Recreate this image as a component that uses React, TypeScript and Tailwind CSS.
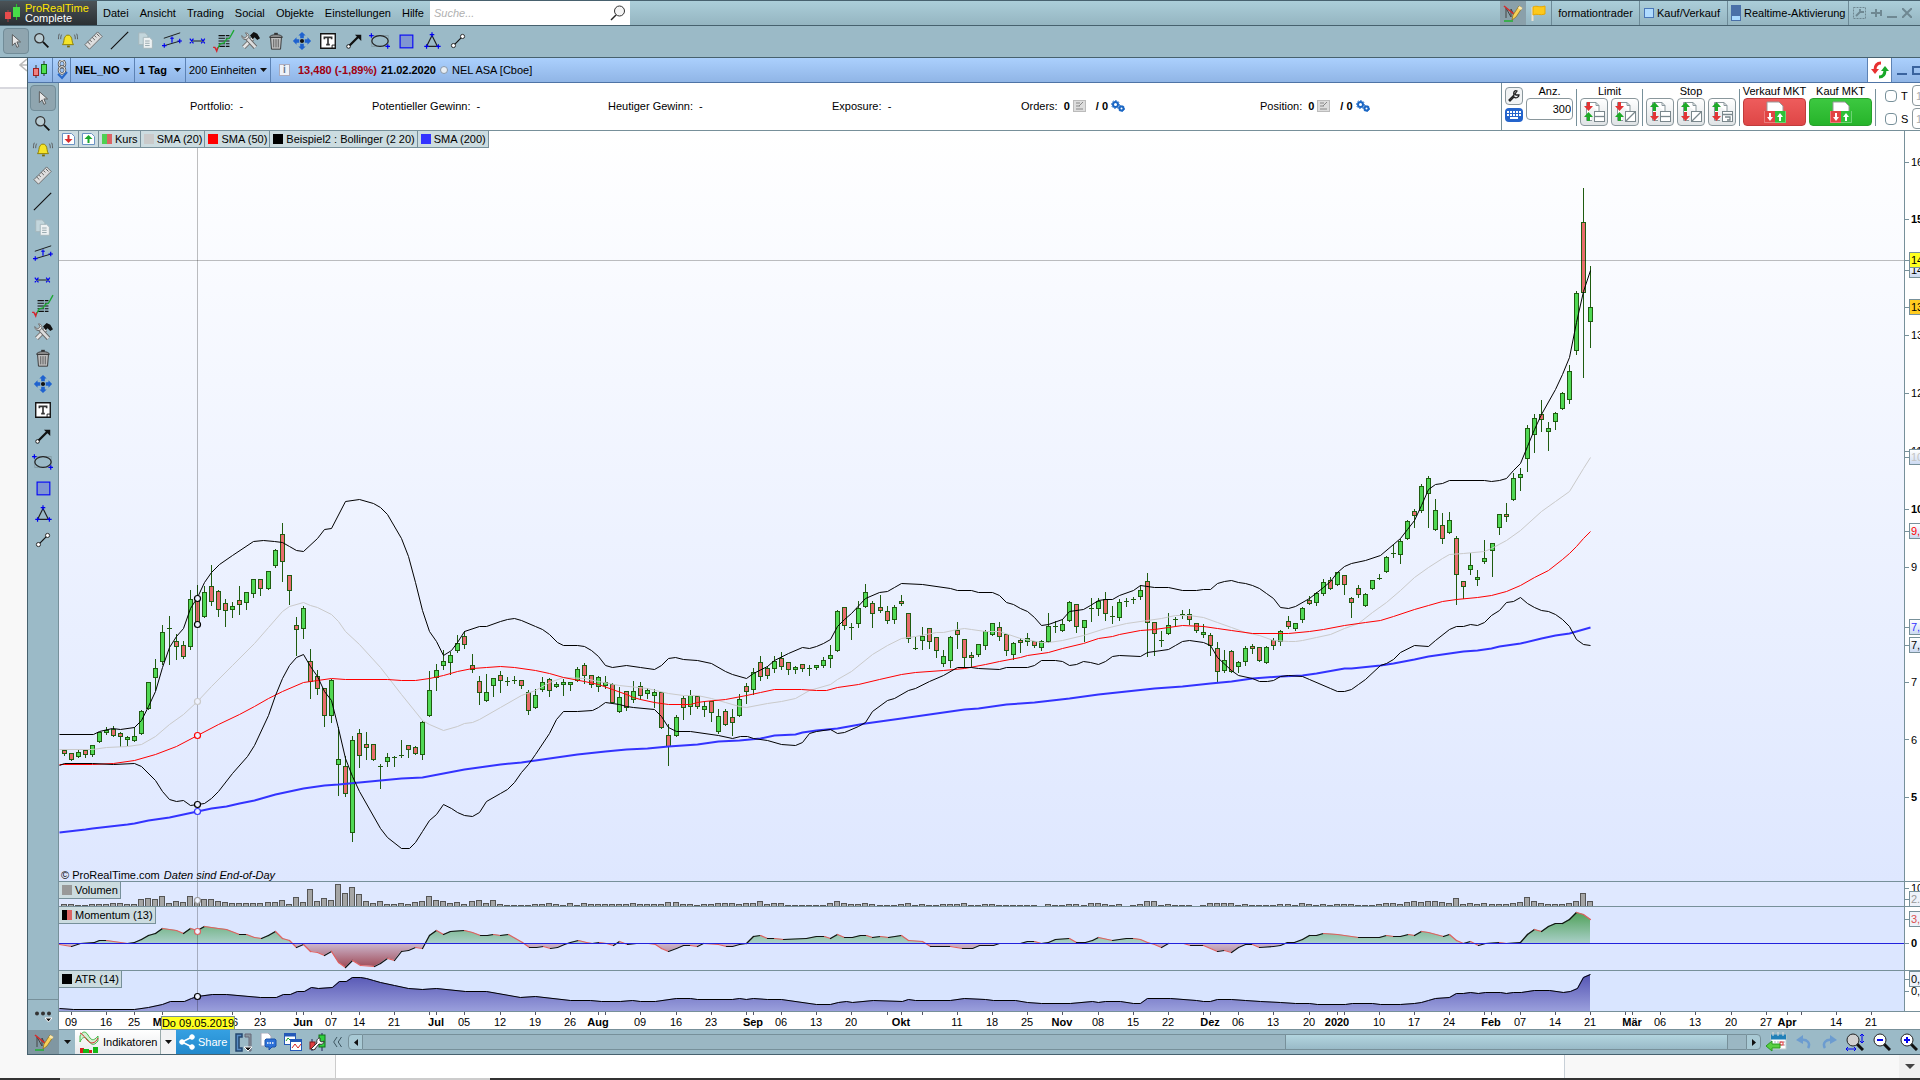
import React from 'react';

type Point = [number, number];
// high, body top, body bottom, low, direction
type Candle = [number, number, number, number, 'u' | 'd'];

const CANDLES: Candle[] = [
  [750, 750, 753, 755, 'd'], [753, 753, 759, 760, 'd'], [750, 752, 756, 757, 'u'], [750, 750, 754, 757, 'd'],
  [745, 745, 754, 756, 'u'], [732, 732, 741, 742, 'u'], [727, 730, 732, 734, 'u'], [726, 729, 735, 736, 'd'],
  [732, 733, 736, 746, 'd'], [736, 737, 739, 745, 'u'], [727, 736, 740, 741, 'u'], [710, 711, 733, 734, 'u'],
  [682, 682, 708, 709, 'u'], [659, 668, 677, 690, 'u'], [625, 632, 661, 664, 'u'], [616, 628, 628, 664, 'u'],
  [634, 641, 646, 659, 'd'], [641, 645, 656, 658, 'd'], [590, 599, 646, 649, 'u'], [585, 598, 624, 627, 'd'],
  [586, 592, 616, 617, 'u'], [565, 586, 601, 605, 'd'], [590, 591, 609, 616, 'd'], [599, 603, 610, 626, 'd'],
  [602, 606, 609, 617, 'u'], [586, 600, 604, 614, 'd'], [592, 592, 602, 609, 'u'], [579, 579, 593, 597, 'u'],
  [579, 579, 588, 595, 'd'], [571, 571, 588, 589, 'u'], [549, 550, 565, 567, 'u'], [523, 534, 561, 581, 'd'],
  [575, 575, 590, 604, 'd'], [617, 625, 629, 655, 'd'], [606, 608, 628, 638, 'u'], [649, 661, 681, 698, 'd'],
  [670, 676, 688, 694, 'd'], [688, 688, 715, 726, 'd'], [679, 680, 715, 722, 'u'], [727, 759, 764, 795, 'u'],
  [756, 766, 793, 796, 'd'], [736, 740, 832, 841, 'u'], [729, 733, 755, 767, 'd'], [732, 744, 747, 759, 'd'],
  [744, 744, 759, 760, 'd'], [764, 765, 766, 788, 'u'], [753, 757, 761, 766, 'u'], [756, 757, 757, 766, 'u'],
  [740, 755, 755, 757, 'u'], [745, 745, 749, 757, 'd'], [746, 747, 753, 754, 'd'], [721, 722, 754, 759, 'u'],
  [671, 690, 715, 716, 'u'], [664, 670, 677, 690, 'u'], [650, 661, 665, 669, 'u'], [652, 655, 662, 674, 'u'],
  [635, 643, 650, 652, 'u'], [631, 636, 644, 648, 'd'], [654, 665, 669, 672, 'd'], [676, 681, 692, 704, 'd'],
  [674, 692, 700, 701, 'u'], [678, 678, 685, 696, 'u'], [671, 675, 680, 692, 'd'], [677, 680, 681, 685, 'u'],
  [676, 680, 680, 683, 'u'], [680, 680, 685, 688, 'd'], [690, 692, 710, 714, 'd'], [689, 695, 707, 708, 'u'],
  [677, 682, 689, 691, 'u'], [678, 679, 690, 696, 'd'], [682, 684, 686, 687, 'u'], [679, 682, 684, 695, 'u'],
  [682, 682, 684, 690, 'u'], [667, 669, 680, 681, 'u'], [663, 665, 675, 683, 'd'], [675, 675, 684, 687, 'd'],
  [676, 677, 686, 691, 'u'], [676, 682, 685, 688, 'u'], [683, 684, 702, 703, 'd'], [687, 697, 711, 712, 'u'],
  [691, 691, 707, 710, 'd'], [681, 691, 699, 702, 'u'], [682, 686, 695, 699, 'd'], [688, 690, 693, 698, 'u'],
  [689, 692, 695, 707, 'u'], [692, 692, 727, 728, 'd'], [724, 735, 746, 765, 'd'], [715, 717, 735, 736, 'u'],
  [696, 698, 707, 719, 'd'], [690, 695, 706, 714, 'u'], [696, 696, 706, 708, 'd'], [701, 706, 709, 716, 'u'],
  [701, 701, 712, 721, 'd'], [709, 716, 731, 733, 'u'], [709, 711, 724, 725, 'd'], [709, 717, 722, 735, 'd'],
  [694, 699, 715, 716, 'u'], [683, 686, 691, 703, 'd'], [668, 672, 689, 694, 'u'], [656, 662, 676, 680, 'd'],
  [666, 668, 675, 678, 'd'], [656, 661, 668, 672, 'u'], [652, 658, 666, 669, 'd'], [662, 662, 669, 674, 'd'],
  [666, 667, 669, 673, 'u'], [664, 664, 668, 671, 'd'], [665, 667, 668, 675, 'u'], [665, 665, 667, 669, 'u'],
  [657, 660, 665, 667, 'u'], [645, 655, 658, 667, 'u'], [610, 611, 650, 651, 'u'], [607, 607, 625, 629, 'd'],
  [623, 626, 627, 639, 'u'], [601, 608, 623, 627, 'u'], [584, 592, 606, 607, 'u'], [601, 603, 613, 627, 'd'],
  [595, 607, 610, 612, 'd'], [606, 611, 620, 623, 'd'], [605, 607, 619, 623, 'u'], [595, 601, 603, 605, 'd'],
  [613, 613, 638, 642, 'd'], [637, 647, 648, 649, 'u'], [627, 636, 640, 649, 'u'], [628, 628, 641, 648, 'd'],
  [637, 637, 650, 657, 'd'], [650, 656, 663, 666, 'u'], [636, 637, 660, 667, 'u'], [622, 630, 634, 648, 'd'],
  [639, 639, 657, 667, 'd'], [652, 655, 657, 667, 'd'], [644, 644, 654, 656, 'u'], [630, 631, 645, 649, 'u'],
  [623, 623, 634, 635, 'u'], [622, 627, 636, 640, 'd'], [634, 634, 650, 655, 'd'], [642, 643, 654, 659, 'u'],
  [638, 640, 642, 652, 'd'], [633, 638, 641, 645, 'u'], [641, 641, 645, 647, 'd'], [640, 641, 647, 650, 'u'],
  [613, 626, 641, 642, 'u'], [621, 626, 626, 632, 'u'], [619, 624, 630, 631, 'u'], [601, 602, 620, 621, 'u'],
  [604, 604, 626, 632, 'd'], [620, 620, 627, 641, 'u'], [598, 608, 608, 621, 'u'], [598, 601, 608, 615, 'u'],
  [592, 599, 613, 620, 'd'], [606, 616, 616, 623, 'u'], [599, 602, 617, 620, 'u'], [598, 601, 601, 606, 'u'],
  [597, 599, 599, 603, 'u'], [585, 590, 596, 599, 'u'], [573, 581, 622, 656, 'd'], [622, 622, 633, 655, 'd'],
  [631, 639, 640, 646, 'u'], [613, 625, 633, 634, 'u'], [617, 619, 619, 625, 'u'], [610, 613, 614, 618, 'u'],
  [609, 614, 619, 624, 'd'], [623, 623, 630, 632, 'd'], [624, 632, 634, 637, 'u'], [633, 635, 645, 655, 'd'],
  [642, 648, 671, 681, 'd'], [650, 660, 670, 672, 'u'], [650, 651, 671, 672, 'd'], [661, 662, 666, 672, 'u'],
  [646, 648, 661, 665, 'u'], [644, 646, 648, 653, 'd'], [647, 647, 660, 661, 'd'], [646, 647, 662, 663, 'u'],
  [638, 640, 645, 649, 'd'], [630, 631, 641, 645, 'u'], [616, 621, 626, 628, 'd'], [623, 623, 628, 630, 'u'],
  [607, 608, 619, 622, 'u'], [596, 600, 603, 604, 'd'], [592, 593, 602, 605, 'u'], [579, 582, 593, 595, 'u'],
  [577, 580, 588, 589, 'd'], [572, 572, 584, 585, 'u'], [575, 575, 584, 594, 'd'], [597, 598, 602, 617, 'd'],
  [585, 588, 594, 597, 'd'], [593, 594, 605, 606, 'u'], [580, 580, 588, 589, 'u'], [574, 577, 578, 579, 'u'],
  [556, 557, 571, 572, 'u'], [544, 552, 553, 557, 'u'], [539, 541, 554, 563, 'u'], [520, 521, 538, 539, 'u'],
  [509, 511, 515, 527, 'd'], [484, 486, 510, 512, 'u'], [476, 478, 493, 527, 'u'], [499, 510, 529, 530, 'u'],
  [513, 525, 538, 543, 'd'], [512, 520, 532, 533, 'u'], [536, 538, 574, 604, 'd'], [581, 581, 586, 598, 'd'],
  [553, 565, 569, 574, 'u'], [570, 577, 579, 585, 'u'], [540, 558, 561, 563, 'u'], [543, 543, 550, 576, 'u'],
  [514, 514, 527, 534, 'u'], [503, 514, 516, 521, 'd'], [473, 478, 499, 500, 'u'], [468, 474, 477, 490, 'u'],
  [425, 428, 458, 471, 'u'], [414, 418, 434, 452, 'u'], [400, 414, 419, 431, 'd'], [422, 428, 431, 450, 'u'],
  [412, 413, 421, 429, 'u'], [392, 393, 408, 409, 'u'], [365, 371, 399, 403, 'u'], [291, 293, 350, 354, 'u'],
  [188, 222, 292, 377, 'd'], [266, 307, 321, 347, 'u'],
];

const VOLUME = [
  2, 2, 1, 1, 2, 2, 2, 3, 3, 2, 2, 7, 8, 7, 10, 3, 5, 4, 10, 7, 7, 7, 5, 4, 3, 3, 3, 3, 3, 4, 4, 6, 2, 9, 4, 17, 5, 8, 6,
  22, 13, 19, 12, 5, 3, 5, 2, 2, 3, 2, 4, 5, 10, 6, 5, 3, 4, 2, 5, 6, 3, 6, 2, 1, 1, 1, 1, 2, 2, 3, 2, 1, 3, 1, 3, 2, 2,
  2, 2, 2, 2, 3, 2, 2, 2, 2, 4, 4, 2, 2, 1, 2, 2, 3, 3, 3, 2, 3, 3, 5, 2, 3, 3, 1, 1, 1, 1, 1, 1, 3, 5, 3, 2, 2, 3, 2,
  1, 1, 1, 2, 3, 1, 2, 1, 1, 2, 2, 2, 3, 1, 1, 2, 2, 1, 1, 1, 1, 1, 1, 0, 2, 1, 1, 2, 2, 1, 3, 3, 2, 1, 2, 0, 1, 2, 5,
  5, 1, 2, 1, 1, 1, 0, 1, 3, 3, 3, 3, 1, 2, 1, 1, 1, 1, 2, 2, 1, 3, 2, 1, 2, 1, 2, 2, 2, 1, 1, 1, 2, 3, 3, 2, 4, 5, 4,
  5, 5, 4, 3, 8, 2, 3, 2, 3, 2, 2, 2, 3, 4, 9, 5, 3, 2, 2, 2, 3, 5, 13, 5,
];

const UPPER =
  '59,734 93,734 99,731 112,728 120,729 134,727 141,720 148,706 155,691 162,667 169,647 176,636 183,628 190,608 197,597 204,582 211,572 219,564 232,555 253,541 263,540 274,541 282,542 289,546 296,550 303,551 317,538 324,529 331,528 345,501 359,499 373,503 380,507 387,514 401,538 408,556 415,582 422,610 429,631 436,641 443,655 451,650 457,642 464,631 479,626 486,626 500,621 507,619 514,618 521,620 535,626 542,629 549,634 557,642 563,645 577,645 584,646 591,650 598,656 605,665 612,667 626,665 640,667 654,669 661,665 668,658 675,657 683,659 697,660 711,663 725,671 732,674 746,678 753,673 767,666 774,660 788,653 802,647 809,648 816,646 823,643 830,639 837,626 844,619 851,613 865,598 879,592 887,591 894,587 901,583 922,584 950,588 957,590 971,590 978,592 992,592 999,595 1006,602 1013,604 1020,608 1027,611 1034,617 1041,625 1048,624 1062,619 1069,611 1083,609 1090,605 1098,600 1105,599 1112,599 1119,595 1133,590 1140,585 1154,587 1168,587 1182,590 1196,590 1203,589 1210,589 1217,583 1224,581 1231,580 1238,582 1245,583 1252,585 1259,588 1266,593 1273,598 1280,607 1288,608 1295,606 1309,598 1323,587 1330,581 1337,572 1344,566 1351,563 1365,560 1380,555 1393,544 1400,538 1407,529 1414,520 1421,505 1428,489 1435,484 1442,483 1449,480 1484,480 1491,481 1499,480 1506,478 1513,470 1520,463 1527,446 1534,429 1541,414 1555,389 1562,374 1569,357 1576,322 1583,291 1590,270';

const LOWER =
  '59,765 64,763 92,763 113,764 134,763 141,766 155,780 162,791 169,799 176,801 183,800 190,805 197,804 204,803 211,798 218,791 232,773 247,756 254,745 268,715 275,695 282,678 289,665 296,657 303,654 310,666 317,676 324,691 331,700 338,728 345,758 352,776 359,791 380,828 387,837 401,848 409,848 415,842 422,831 429,820 436,814 443,804 451,808 457,812 464,815 472,816 479,812 486,801 500,793 507,789 514,782 521,772 528,764 535,754 549,733 556,719 563,711 577,711 592,710 598,707 605,702 612,703 619,704 626,706 633,707 654,709 661,716 668,727 676,731 690,731 718,735 732,738 740,736 747,736 753,738 767,740 781,744 795,745 802,742 809,733 816,731 830,729 837,733 844,732 858,726 865,722 872,711 887,700 894,698 908,690 915,688 929,681 943,675 957,667 971,667 978,668 999,669 1006,667 1027,667 1034,665 1041,660 1055,660 1062,661 1069,665 1076,664 1083,661 1090,662 1098,664 1105,661 1112,656 1119,655 1140,656 1147,652 1154,651 1168,649 1175,645 1182,641 1189,640 1203,642 1210,645 1217,657 1231,670 1238,675 1252,678 1259,681 1267,681 1273,680 1280,676 1288,675 1302,676 1309,679 1330,688 1337,691 1344,691 1351,689 1358,684 1365,679 1380,665 1386,663 1393,659 1400,652 1414,645 1428,646 1435,640 1449,629 1456,626 1463,626 1470,624 1477,625 1484,622 1491,615 1499,610 1506,602 1513,601 1520,597 1527,603 1534,607 1541,610 1548,611 1555,614 1562,619 1569,626 1576,639 1583,644 1590,645';

const SMA20 =
  '59,749 92,749 106,747 127,746 141,744 155,736 169,724 183,714 197,701 211,686 232,665 254,643 268,627 282,611 289,606 303,602 310,605 317,607 331,614 338,621 345,631 359,644 380,667 401,694 422,720 429,724 443,730 457,726 464,723 472,722 479,719 500,707 521,695 535,690 549,682 563,677 584,678 598,681 619,685 647,688 668,693 683,695 697,695 711,698 725,702 739,706 746,707 767,703 781,701 795,698 809,690 830,684 837,679 851,671 872,654 887,645 901,638 915,636 936,632 943,632 957,629 964,628 971,629 985,631 999,631 1020,638 1041,642 1048,642 1062,640 1083,635 1105,628 1126,623 1147,620 1161,618 1175,615 1189,615 1203,617 1217,622 1231,627 1245,632 1259,635 1273,640 1288,641 1295,641 1302,640 1316,637 1330,634 1344,628 1358,623 1372,612 1386,602 1400,590 1414,577 1428,567 1442,558 1449,554 1463,553 1484,551 1491,548 1506,540 1520,530 1541,511 1555,501 1569,491 1583,468 1590,457';

const SMA50 =
  '59,764 92,764 113,763 134,760 155,754 176,746 197,735 218,724 239,714 254,706 268,698 282,691 303,682 317,680 331,678 345,679 387,679 401,680 415,680 429,678 443,675 457,671 472,668 486,667 500,666 514,667 535,670 549,673 563,677 584,681 598,684 612,689 626,694 633,697 640,699 654,702 668,704 690,704 697,702 704,701 725,699 746,695 760,692 774,689 801,689 816,690 826,690 837,687 858,684 879,679 901,674 915,672 943,670 964,668 985,664 999,661 1020,657 1027,655 1048,652 1062,648 1083,643 1098,638 1112,636 1119,634 1140,630 1154,629 1168,627 1182,625 1203,626 1217,628 1231,630 1252,633 1288,633 1309,631 1323,629 1344,625 1365,622 1380,620 1393,616 1414,609 1428,605 1442,601 1456,599 1477,597 1491,595 1506,591 1520,585 1534,577 1548,570 1562,559 1569,553 1576,546 1583,538 1590,531';

const SMA200 =
  '59,832 85,829 92,828 127,824 134,823 148,820 169,817 183,814 197,811 211,808 226,806 239,803 254,800 275,794 303,788 324,785 338,784 359,782 380,780 401,778 422,777 443,773 464,769 500,764 521,762 542,759 549,758 577,754 605,751 626,749 647,748 668,746 697,744 718,741 739,740 760,738 774,735 795,734 802,732 816,730 837,728 865,723 901,718 929,714 950,711 964,709 978,708 1006,704 1020,703 1034,702 1069,698 1098,694 1126,691 1154,688 1182,686 1210,683 1231,681 1252,678 1280,676 1302,675 1316,673 1344,668 1351,668 1380,665 1393,663 1414,659 1428,656 1463,651 1477,650 1491,648 1499,646 1520,643 1541,638 1555,635 1569,633 1590,627';

const MOMENTUM: Point[] = [
  [59, 944], [71, 946], [80, 943], [94, 942], [99, 940], [106, 940], [120, 942], [127, 943], [134, 942], [141, 939], [148, 935],
  [155, 933], [162, 928], [176, 930], [183, 933], [190, 928], [197, 930], [204, 926], [218, 928], [226, 929], [239, 934],
  [246, 934], [254, 937], [261, 938], [268, 935], [275, 931], [282, 938], [289, 940], [296, 947], [303, 944], [310, 951],
  [317, 952], [324, 955], [331, 951], [338, 962], [345, 967], [352, 960], [360, 965], [374, 966], [380, 963], [387, 958],
  [394, 960], [401, 951], [408, 950], [415, 947], [422, 948], [429, 935], [436, 930], [443, 934], [450, 931], [464, 930],
  [472, 932], [480, 935], [487, 935], [493, 934], [500, 935], [508, 934], [515, 938], [522, 942], [529, 947], [536, 947],
  [543, 946], [550, 948], [557, 947], [564, 944], [570, 942], [578, 940], [586, 942], [592, 943], [599, 942], [606, 943],
  [613, 945], [619, 941], [627, 944], [636, 943], [648, 943], [655, 944], [661, 948], [668, 951], [676, 948], [683, 945],
  [690, 945], [697, 946], [703, 943], [718, 944], [726, 946], [732, 946], [739, 944], [746, 943], [753, 936], [760, 935],
  [767, 938], [774, 938], [783, 939], [806, 938], [816, 936], [824, 936], [830, 938], [837, 934], [844, 937], [852, 937],
  [860, 935], [866, 935], [872, 937], [880, 936], [888, 937], [901, 935], [908, 940], [922, 941], [930, 946], [950, 946],
  [962, 948], [972, 948], [979, 945], [993, 945], [999, 943], [1020, 943], [1027, 941], [1034, 941], [1041, 943], [1048, 942],
  [1055, 939], [1069, 938], [1076, 942], [1085, 942], [1092, 940], [1098, 937], [1112, 940], [1126, 938], [1133, 938],
  [1140, 939], [1147, 942], [1154, 944], [1161, 947], [1168, 943], [1183, 943], [1190, 945], [1203, 945], [1217, 951],
  [1224, 950], [1231, 952], [1238, 947], [1245, 944], [1252, 944], [1259, 947], [1273, 946], [1280, 945], [1287, 942],
  [1294, 942], [1302, 939], [1309, 935], [1316, 935], [1323, 933], [1337, 934], [1358, 937], [1379, 937], [1386, 935],
  [1393, 936], [1400, 936], [1408, 934], [1414, 935], [1421, 931], [1428, 932], [1443, 936], [1449, 934], [1456, 940],
  [1463, 943], [1470, 941], [1478, 945], [1485, 943], [1499, 942], [1506, 943], [1520, 942], [1527, 934], [1534, 929],
  [1541, 931], [1548, 926], [1555, 923], [1562, 923], [1569, 919], [1576, 912], [1583, 914], [1590, 919],
];

const ATR =
  '59,1008 73,1009 134,1009 148,1007 162,1004 170,1001 184,1001 191,998 197,996 212,994 226,994 260,997 276,997 283,994 290,994 297,991 304,991 311,987 318,988 332,987 339,981 346,981 352,977 360,977 366,978 373,980 380,982 394,985 408,988 422,989 436,988 465,991 486,991 520,997 535,996 570,1000 590,1000 601,1001 620,1001 632,1000 640,1001 655,1001 676,998 690,998 697,999 732,999 739,998 746,999 753,998 767,999 781,999 816,1004 830,1004 838,1002 846,1001 852,1002 873,1000 902,1001 908,999 915,1000 950,1000 964,998 985,999 993,1000 1015,1000 1027,1002 1041,1003 1070,1003 1092,1001 1098,1002 1105,1001 1120,1001 1133,1003 1140,1003 1147,998 1170,998 1196,1000 1203,1001 1210,1001 1217,999 1231,999 1245,1000 1260,1001 1280,1002 1295,1003 1309,1003 1317,1004 1345,1004 1352,1003 1372,1003 1380,1004 1400,1004 1414,1003 1421,1002 1428,1000 1435,998 1449,997 1456,993 1463,993 1470,992 1478,993 1485,992 1500,992 1506,993 1513,992 1521,992 1534,990 1549,990 1563,992 1570,991 1577,988 1583,977 1590,974';

const DATES: [string, number][] = [
  ['09', 71], ['16', 106], ['25', 134], ['Mai', 162], ['16', 232], ['23', 260], ['Jun', 303], ['07', 331], ['14', 359],
  ['21', 394], ['Jul', 436], ['05', 464], ['12', 500], ['19', 535], ['26', 570], ['Aug', 598], ['09', 640], ['16', 676],
  ['23', 711], ['Sep', 753], ['06', 781], ['13', 816], ['20', 851], ['Okt', 901], ['11', 957], ['18', 992], ['25', 1027],
  ['Nov', 1062], ['08', 1098], ['15', 1133], ['22', 1168], ['Dez', 1210], ['06', 1238], ['13', 1273], ['20', 1309],
  ['2020', 1337], ['10', 1379], ['17', 1414], ['24', 1449], ['Feb', 1491], ['07', 1520], ['14', 1555], ['21', 1590],
  ['Mär', 1632], ['06', 1660], ['13', 1695], ['20', 1731], ['27', 1766], ['Apr', 1787], ['14', 1836], ['21', 1871],
];
const EXTRA_TICKS = [296, 429, 605, 746, 887, 922, 1203, 1344, 1484, 1625, 1801];

const LEFT = 59;
const WIDTH = 1845;
const ZERO = 943;
const CURSOR_X = 197.5;

const barX = (i: number) => 64 + Math.floor((i * 204) / 29);
const pct = (x: number) => `${((x - LEFT) / WIDTH) * 100}%`;

const TOOLS = [
  'cursor', 'zoom', 'alarm', 'ruler', 'line', 'copy', 'channel', 'segment', 'system', 'tools', 'trash', 'move', 'text',
  'arrow', 'ellipse', 'rect', 'triangle', 'nodes',
] as const;
type Tool = (typeof TOOLS)[number];

const TOOL_DRAWINGS: Record<Tool, React.ReactNode> = {
  cursor: <path d="M7 4v12l3-3 2 5 2-1-2-5h4z" fill="#e8e8e8" stroke="#555" />,
  zoom: (
    <>
      <circle cx="8" cy="8" r="5" fill="#b9ccd3" stroke="#333" strokeWidth="1.4" />
      <path d="M12 12l6 6" stroke="#111" strokeWidth="2" />
    </>
  ),
  alarm: (
    <>
      <path d="M5 15c2-2 1-7 3-9 1-2 5-2 6 0 2 2 1 7 3 9z" fill="#f5e428" stroke="#8a7a00" />
      <path d="M10 17h3" stroke="#7a6a00" strokeWidth="2" />
      <path d="M4 4c-1 2-1 3-1 5M1.500 3c-1 2-1 4-1 6M18 4c1 2 1 3 1 5M20.500 3c1 2 1 4 1 6" fill="none" stroke="#555" />
    </>
  ),
  ruler: (
    <>
      <path d="M1 15L15 1l5 5L6 20z" fill="#dedede" stroke="#666" />
      <path d="M4 12l3 3M6.500 10l2 2M9 7l3 3M11.500 5l2 2M14 3l3 3" stroke="#555" />
    </>
  ),
  line: <path d="M1 20L20 1" stroke="#111" strokeWidth="1.3" />,
  copy: (
    <>
      <path d="M3 2h7l3 3v10H3z" fill="#c3d6dc" stroke="#a3b5bb" />
      <path d="M8 7h7l3 3v9H8z" fill="#eef2f3" stroke="#a3b5bb" />
      <path d="M10 11h5M10 13.500h5M10 16h5" stroke="#8fa1a8" />
    </>
  ),
  channel: (
    <>
      <path d="M2 8l18-6M3 16l17-5" stroke="#111" />
      <path d="M0 16h5M2.500 13.500v5M17 11h5M19.500 8.500v5M11 6v7M9 8h4" stroke="#0000f0" strokeWidth="1.300" />
    </>
  ),
  segment: (
    <>
      <path d="M4 11h14" stroke="#111" />
      <path d="M2 8.500l4 5M2 13.500l4-5M14.500 8.500l4 5M14.500 13.500l4-5" stroke="#0000f0" strokeWidth="1.300" />
    </>
  ),
  system: (
    <>
      <path d="M5 5h13M5 8h13M5 11h13M5 14h13M5 17h13" stroke="#111" strokeWidth="1.300" strokeDasharray="7 1 4 1" />
      <path d="M3 21l4-7 4-1 3-4 3-1 5-9" fill="none" stroke="#1ca832" strokeWidth="1.500" />
      <path d="M-1 18l2 0 2 4 1-4" fill="none" stroke="#d8202c" strokeWidth="1.500" />
    </>
  ),
  tools: (
    <>
      <path d="M4 18L14 8" stroke="#777" strokeWidth="5" />
      <path d="M4 18L14 8" stroke="#e6e6e6" strokeWidth="3" />
      <path d="M6 6l11 12" stroke="#666" strokeWidth="5" />
      <path d="M6 6l11 12" stroke="#ddd" strokeWidth="3" />
      <path d="M2 5l3 3 3-3-2-3c3 0 5 3 3 6-3 3-7 1-7-3z" fill="#ddd" stroke="#666" />
      <path d="M11 5l4-4 4 2 3 5-3 2-3-3-2 2z" fill="#111" />
    </>
  ),
  trash: (
    <>
      <path d="M5 7h12l-1 13H6z" fill="#bdbdbd" stroke="#333" />
      <path d="M8.500 9v9M11 9v9M13.500 9v9" stroke="#555" />
      <path d="M4 7c0-4 14-4 14 0z" fill="#999" stroke="#333" />
      <path d="M9 3h4" stroke="#333" strokeWidth="2" />
    </>
  ),
  move: (
    <>
      <circle cx="11" cy="11" r="2.300" fill="#111" />
      <path d="M11 1l4 4h-2v3H9V5H7zM11 21l4-4h-2v-3H9v3H7zM1 11l4-4v2h3v4H5v2zM21 11l-4-4v2h-3v4h3v2z" fill="#1f62cf" />
    </>
  ),
  text: (
    <>
      <path d="M3 3h16v16H3z" fill="#fff" stroke="#111" strokeWidth="1.500" />
      <path d="M15.500 19v-3.500h3.500" fill="none" stroke="#111" />
      <path d="M7 9V7h8v2M11 7v8M9 15h4" fill="none" stroke="#333" strokeWidth="1.800" />
    </>
  ),
  arrow: (
    <>
      <path d="M5 17L16 6" stroke="#111" strokeWidth="2.500" />
      <path d="M12 4h7v7z" fill="#111" />
      <circle cx="5" cy="17" r="2" fill="#fff" stroke="#111" />
    </>
  ),
  ellipse: (
    <>
      <rect x="2" y="5" width="18" height="12" fill="none" stroke="#829aa4" />
      <ellipse cx="11" cy="11" rx="9" ry="6" fill="none" stroke="#222" strokeWidth="1.300" />
      <path d="M-1 5h5M1.500 2.500v5M17 17h5M19.500 14.500v5" stroke="#0000f0" strokeWidth="1.300" />
    </>
  ),
  rect: <rect x="4.500" y="4.500" width="14" height="14" fill="#8096d2" stroke="#0a0af5" strokeWidth="1.300" />,
  triangle: (
    <>
      <path d="M11 5L5 17h12z" fill="none" stroke="#222" strokeWidth="1.300" />
      <path d="M8.500 4h5M11 1.500v5M2.500 17h5M5 14.500v5M15.500 17h5M18 14.500v5" stroke="#0000f0" strokeWidth="1.300" />
    </>
  ),
  nodes: (
    <>
      <path d="M6 16L16 6" stroke="#111" strokeWidth="1.300" />
      <circle cx="6" cy="16" r="2.300" fill="#fff" stroke="#222" />
      <circle cx="16" cy="6" r="2.300" fill="#fff" stroke="#222" />
    </>
  ),
};

const ToolButton: React.FC<{ tool: Tool }> = ({ tool }) => (
  <button
    type="button"
    aria-label={tool}
    className={`flex size-[26px] shrink-0 items-center justify-center rounded-sm border ${
      tool === 'cursor' ? 'border-[#718c98] bg-[#8fa5af]' : 'border-transparent'
    }`}
  >
    <svg width="20" height="20" viewBox="0 0 22 22" className="overflow-visible">
      {TOOL_DRAWINGS[tool]}
    </svg>
  </button>
);

const Caret: React.FC = () => (
  <svg width="7" height="4" viewBox="0 0 7 4">
    <path d="M0 0h7L3.500 4z" fill="#111" />
  </svg>
);

const PencilIcon: React.FC = () => (
  <svg width="20" height="18" viewBox="0 0 20 18">
    <path d="M3 14V4l5 9V5l3 6" fill="none" stroke="#444" />
    <path d="M1 2l11 9" stroke="#d82828" strokeWidth="1.500" />
    <path d="M1 17h9" stroke="#20b030" strokeWidth="1.500" />
    <path d="M9 16l1-5 6-9 3 2-6 9z" fill="#f9d25a" stroke="#8a6a18" strokeWidth="0.700" />
    <path d="M15 4l3 2 1.500-2-3-2z" fill="#fbe9b0" />
  </svg>
);

const Header: React.FC = () => (
  <header className="flex h-[26px] shrink-0 items-stretch border-y border-[#47616e] bg-linear-to-b from-[#abced9] to-[#95b5c1]">
    <div className="flex w-[97px] items-center gap-1 bg-linear-to-b from-[#4b5357] to-[#2b3034] pl-1">
      <svg width="17" height="20" viewBox="0 0 17 20">
        <path d="M4 7v12" stroke="#b04040" />
        <path d="M12.500 1v16" stroke="#28c428" />
        <rect x="1" y="9" width="6" height="7" fill="#e84c4c" />
        <rect x="9" y="4" width="7" height="10" fill="#48dc48" />
      </svg>
      <div className="text-[11px] leading-[10px] text-white">
        <div className="text-[#ffe600]">ProRealTime</div>
        <div>Complete</div>
      </div>
    </div>
    <nav className="flex w-[333px] items-center justify-between pl-1.5 pr-1.5">
      {['Datei', 'Ansicht', 'Trading', 'Social', 'Objekte', 'Einstellungen', 'Hilfe'].map(item => (
        <button type="button" key={item}>{item}</button>
      ))}
    </nav>
    <label className="flex w-[200px] items-center bg-white px-1">
      <input type="text" aria-label="Suche" placeholder="Suche..." className="min-w-0 flex-1 italic outline-none placeholder:text-[#b0b0b0]" />
      <svg width="16" height="16" viewBox="0 0 16 16">
        <circle cx="9.500" cy="6" r="5" fill="#f4f4f4" stroke="#333" />
        <path d="M6 10l-5 5" stroke="#222" strokeWidth="1.500" />
      </svg>
    </label>
    <div className="flex-1" />
    <button type="button" aria-label="Zeichnen" className="flex w-[26px] items-center justify-center bg-[#8aa0aa]"><PencilIcon /></button>
    <button type="button" aria-label="Flagge" className="flex w-[25px] items-center justify-center">
      <svg width="16" height="17" viewBox="0 0 16 17">
        <path d="M1.500 2v14" stroke="#e8e0d0" strokeWidth="2" />
        <path d="M2 2c4-2 6 1 12-1v8c-5 2-8-1-12 1z" fill="#fcc91c" stroke="#e8a800" />
      </svg>
    </button>
    <button type="button" className="flex w-[88px] items-center justify-center border-l border-[#6d8a97]">formationtrader</button>
    <button type="button" className="flex w-[88px] items-center gap-[3px] border-l border-[#6d8a97] pl-1 whitespace-nowrap">
      <span className="size-[10px] shrink-0 border border-[#4a78b8] bg-[#b0dcff]" />Kauf/Verkauf
    </button>
    <button type="button" className="flex w-[121px] items-center gap-[3px] border-l border-[#6d8a97] pl-[3px] whitespace-nowrap">
      <span className="flex h-4 w-[10px] shrink-0 items-end border border-[#4a70a8] bg-[#4a70a8]"><span className="h-1 w-full bg-[#a8d8ff]" /></span>
      Realtime-Aktivierung
    </button>
    <div className="flex w-[72px] items-center justify-between border-l border-[#6d8a97] pl-1 pr-2">
      <button type="button" aria-label="Einstellungen">
        <svg width="13" height="12" viewBox="0 0 13 12" fill="none" stroke="#6f8892">
          <rect x="0.500" y="0.500" width="12" height="11" strokeDasharray="2 1" />
          <path d="M3 9l4-4M7 2v3h4" strokeWidth="1.800" />
        </svg>
      </button>
      <button type="button" aria-label="Anheften">
        <svg width="11" height="8" viewBox="0 0 11 8"><path d="M0 4h4M5 0v8M5 4h5M10 1v6" stroke="#6f8892" strokeWidth="2" /></svg>
      </button>
      <button type="button" aria-label="Minimieren">
        <svg width="10" height="10" viewBox="0 0 10 10"><path d="M0 9h10" stroke="#6f8892" strokeWidth="2" /></svg>
      </button>
      <button type="button" aria-label="Schließen">
        <svg width="10" height="10" viewBox="0 0 10 10"><path d="M0 0l10 10M10 0L0 10" stroke="#6f8892" strokeWidth="2" /></svg>
      </button>
    </div>
  </header>
);

const TitleBar: React.FC = () => (
  <div className="flex h-[25px] shrink-0 items-stretch border-b border-[#4f74a6] bg-linear-to-b from-[#abd0fd] to-[#90b5e6] whitespace-nowrap">
    <div className="flex w-6 items-center justify-center">
      <svg width="16" height="18" viewBox="0 0 16 18">
        <path d="M4 4v13M12 0v15" stroke="#333" />
        <rect x="1.500" y="7.500" width="5" height="7" fill="#f08080" stroke="#a02020" />
        <rect x="9.500" y="3.500" width="5" height="9" fill="#50e050" stroke="#107010" />
      </svg>
    </div>
    <button type="button" aria-label="Verknüpfen" className="flex w-[18px] items-center justify-center border-l border-[#5c82b4]">
      <svg width="12" height="20" viewBox="0 0 12 20" fill="none">
        <ellipse cx="6" cy="4" rx="3" ry="3.500" stroke="#555" strokeWidth="2.500" />
        <ellipse cx="6" cy="4" rx="3" ry="3.500" stroke="#eee" />
        <ellipse cx="6" cy="10" rx="3" ry="3.500" stroke="#555" strokeWidth="2.500" />
        <ellipse cx="6" cy="10" rx="3" ry="3.500" stroke="#eee" />
        <path d="M2 14l4 4 5-6" stroke="#2868c8" strokeWidth="2" />
      </svg>
    </button>
    <button type="button" className="flex w-16 items-center justify-between border-l border-[#5c82b4] px-1 font-bold">NEL_NO <Caret /></button>
    <button type="button" className="flex w-[51px] items-center justify-between border-l border-[#5c82b4] px-1 font-bold">1 Tag <Caret /></button>
    <button type="button" className="flex w-[86px] items-center justify-between border-x border-[#5c82b4] px-[3px]">200 Einheiten <Caret /></button>
    <div className="flex flex-1 items-center gap-1 pl-2">
      <span className="flex h-3 w-[11px] items-center justify-center border border-[#aab] bg-[#eef2f8] text-[10px] font-bold text-[#667890]">i</span>
      <span className="ml-1 font-bold text-[#a00010]">13,480 (-1,89%)</span>
      <span className="font-bold">21.02.2020</span>
      <span className="size-2 rounded-full border border-[#8a98a8] bg-[#e8eef4]" />
      <span>NEL ASA [Cboe]</span>
    </div>
    <button type="button" aria-label="Aktualisieren" className="flex w-6 items-center justify-center border-l border-[#5c82b4] bg-white">
      <svg width="18" height="18" viewBox="0 0 18 18">
        <path d="M10 2C5 2 4 6 4 9" fill="none" stroke="#e83030" strokeWidth="3" />
        <path d="M0 8h8l-4 5z" fill="#e83030" />
        <path d="M8 16c5 0 6-4 6-7" fill="none" stroke="#18a828" strokeWidth="3" />
        <path d="M10 10h8l-4-5z" fill="#18a828" />
      </svg>
    </button>
    <div className="flex w-[29px] items-center gap-1 overflow-hidden border-l border-[#5c82b4] pl-[5px]">
      <svg width="26" height="12" viewBox="0 0 26 12" className="shrink-0">
        <path d="M0 10h10" stroke="#3a639e" strokeWidth="2" />
        <rect x="16" y="3" width="9" height="7" fill="none" stroke="#3a639e" strokeWidth="2" />
      </svg>
    </div>
  </div>
);

const OrderIcon: React.FC<{ first: 'buy' | 'sell'; mark: string }> = ({ first, mark }) => (
  <svg width="22" height="22" viewBox="0 0 22 22">
    <path d="M3.500 1.500H13l3 3v6M3.500 1.500v18H9" fill="#fff" stroke="#8a979c" />
    <path d="M13 1.500v3h3" fill="none" stroke="#8a979c" />
    {first === 'sell' ? (
      <>
        <path d="M4 1h3v4h3l-4.500 5L1 5h3z" fill="#e23434" />
        <path d="M4 20h3v-4h3l-4.500-5L1 16h3z" fill="#1eaa28" />
      </>
    ) : (
      <>
        <path d="M4 10h3V6h3L5.500 1 1 6h3z" fill="#1eaa28" />
        <path d="M4 11h3v4h3l-4.500 5L1 15h3z" fill="#e23434" />
      </>
    )}
    <rect x="11.500" y="10.500" width="10" height="10" fill="#fff" stroke="#7a878c" />
    <path d={mark} fill="none" stroke="#7a878c" strokeWidth="1.300" />
  </svg>
);

const MARK_EVEN = 'M12 15.500h9';
const MARK_SLOPE = 'M12 20l9-9';
const MARK_STEP = 'M12 13.500h9M14 16h5v3h-3';

const OrderButton: React.FC<{ label: string; first: 'buy' | 'sell'; mark: string }> = ({ label, first, mark }) => (
  <button type="button" aria-label={label} className="flex h-7 w-7 items-center justify-center rounded-sm border border-[#8a979c] bg-linear-to-b from-white to-[#dfe3e5]">
    <OrderIcon first={first} mark={mark} />
  </button>
);

const MarketIcon: React.FC = () => (
  <svg width="22" height="22" viewBox="0 0 22 22">
    <path d="M3 1h12l4 4v6H3z" fill="#fff" stroke="#999" />
    <rect x="0" y="10" width="11" height="12" fill="#e24444" />
    <rect x="11" y="10" width="11" height="12" fill="#30c038" />
    <path d="M0.500 10v11.500h21V10" fill="none" stroke="#fff" strokeOpacity="0.300" />
    <path d="M5 12h2v4h2l-3 4-3-4h2zM15 20h2v-4h2l-3-4-3 4h2z" fill="#fff" />
  </svg>
);

const Gears: React.FC = () => (
  <svg width="14" height="12" viewBox="0 0 14 12" fill="none" stroke="#1a66c4" strokeWidth="2">
    <circle cx="4.500" cy="4.500" r="2.500" />
    <circle cx="4.500" cy="4.500" r="4" strokeWidth="1" strokeDasharray="1.500 1.500" />
    <circle cx="10.500" cy="8.500" r="2" />
    <circle cx="10.500" cy="8.500" r="3" strokeWidth="1" strokeDasharray="1.500 1.500" />
  </svg>
);

const Counter: React.FC<{ label: string }> = ({ label }) => (
  <div className="flex items-center">
    {label} <b className="ml-1.5">0</b>
    <svg width="13" height="12" viewBox="0 0 13 12" className="ml-[3px]">
      <rect x="0.500" y="0.500" width="12" height="11" fill="#ddd" stroke="#bbb" />
      <path d="M3 3h4M3 6h4M3 9h7M10 2L6 6" stroke="#888" />
    </svg>
    <b className="ml-[10px]">/ 0</b>
    <span className="ml-[3px]"><Gears /></span>
  </div>
);

const TradingPanel: React.FC = () => (
  <section className="flex h-12 shrink-0 items-stretch overflow-hidden border-b border-[#77909a] bg-white whitespace-nowrap">
    <div className="grid flex-1 grid-cols-[182fr_236fr_224fr_189fr_239fr_241fr] items-center pb-0.5 pl-[131px]">
      <div>Portfolio: &nbsp;-</div>
      <div>Potentieller Gewinn: &nbsp;-</div>
      <div>Heutiger Gewinn: &nbsp;-</div>
      <div>Exposure: &nbsp;-</div>
      <Counter label="Orders:" />
      <Counter label="Position:" />
    </div>
    <div className="flex gap-[3px] border-l border-[#77909a] pl-[3px] pt-0.5">
      <div className="flex flex-col gap-[3px] pt-0.5">
        <button type="button" aria-label="Einstellungen" className="flex size-[18px] items-center justify-center rounded-sm border border-[#8a979c] bg-[#f1f3f4]">
          <svg width="12" height="12" viewBox="0 0 12 12" fill="none" stroke="#222" strokeWidth="1.300"><path d="M1 10l5-5c-1-3 1-5 3-4L7 4l1 1h3c0 2-3 4-5 2l-4 4z" /></svg>
        </button>
        <button type="button" aria-label="Tastatur" className="flex h-[14px] w-[18px] items-center justify-center rounded-sm bg-[#2464cc]">
          <svg width="14" height="8" viewBox="0 0 14 8"><path d="M0 1h14M0 4h14" stroke="#fff" strokeWidth="2" strokeDasharray="2 1" /><path d="M3 7h8" stroke="#fff" strokeWidth="2" /></svg>
        </button>
      </div>
      <label className="flex w-[47px] flex-col items-center leading-[13px]">
        Anz.
        <input type="text" defaultValue="300" className="h-[22px] w-full rounded-sm border border-[#8a979c] pr-px text-right" />
      </label>
      <div className="my-1 w-px bg-[#77909a]" />
      <div className="flex flex-col items-center leading-[13px]">
        Limit
        <div className="flex gap-[3px]">
          <OrderButton label="Limit" first="sell" mark={MARK_EVEN} />
          <OrderButton label="Limit an Linie" first="sell" mark={MARK_SLOPE} />
        </div>
      </div>
      <div className="my-1 w-px bg-[#77909a]" />
      <div className="flex flex-col items-center leading-[13px]">
        Stop
        <div className="flex gap-[3px]">
          <OrderButton label="Stop" first="buy" mark={MARK_EVEN} />
          <OrderButton label="Stop an Linie" first="buy" mark={MARK_SLOPE} />
          <OrderButton label="Trailing Stop" first="buy" mark={MARK_STEP} />
        </div>
      </div>
      <div className="my-1 w-px bg-[#77909a]" />
      <div className="flex w-[63px] flex-col items-center leading-[13px]">
        Verkauf MKT
        <button type="button" aria-label="Verkauf MKT" className="flex h-7 w-full items-center justify-center rounded-sm border border-[#c03c3c] bg-linear-to-b from-[#ee5c5c] to-[#de4646]"><MarketIcon /></button>
      </div>
      <div className="flex w-[63px] flex-col items-center leading-[13px]">
        Kauf MKT
        <button type="button" aria-label="Kauf MKT" className="flex h-7 w-full items-center justify-center rounded-sm border border-[#28a02c] bg-linear-to-b from-[#3cc840] to-[#26b42a]"><MarketIcon /></button>
      </div>
      <div className="my-1 w-px bg-[#77909a]" />
      <div className="flex w-[41px] flex-col gap-0.5 overflow-hidden pl-1.5">
        {['T', 'S'].map(name => (
          <div key={name} className="flex h-[21px] shrink-0 items-center">
            <label className="flex items-center gap-1">
              <input type="checkbox" className="size-3 shrink-0 appearance-none rounded-sm border border-[#77909a] bg-white" />
              <span className="w-[11px]">{name}</span>
            </label>
            <input type="text" aria-label={`${name} Wert`} defaultValue="10" className="h-[21px] w-8 shrink-0 rounded-sm border border-[#8a979c] pl-[3px] text-[#aaa]" />
          </div>
        ))}
      </div>
    </div>
  </section>
);

const PaneLabel: React.FC<{ label: string; children: React.ReactNode }> = ({ label, children }) => (
  <div className="absolute left-0 top-0 flex h-[17px] items-center gap-[3px] border-b border-r border-[#77909a] bg-[#ccdce0] pl-[3px] pr-0.5">
    <span className="flex size-[10px]">{children}</span>
    {label}
  </div>
);

const LEGEND = [
  { label: 'Kurs', left: 'bg-[#4fd052]', right: 'bg-[#dc6464]' },
  { label: 'SMA (20)', left: 'bg-[#cacaca]', right: 'bg-[#cacaca]' },
  { label: 'SMA (50)', left: 'bg-[#ff0000]', right: 'bg-[#ff0000]' },
  { label: 'Beispiel2 : Bollinger (2 20)', left: 'bg-black', right: 'bg-black' },
  { label: 'SMA (200)', left: 'bg-[#3333ff]', right: 'bg-[#3333ff]' },
];

const Legend: React.FC = () => (
  <div className="absolute left-0 top-0 flex h-[17px] border-b border-[#77909a] bg-[#ccdce0] whitespace-nowrap">
    {['#d82c2c', '#1aa82a'].map((color, i) => (
      <button type="button" key={color} aria-label={i === 0 ? 'Verkaufen' : 'Kaufen'} className="flex w-5 items-center justify-center border-r border-[#77909a]">
        <svg width="13" height="12" viewBox="0 0 13 12">
          <path d="M0.500 0.500h9l3 3v8h-12z" fill="#fff" stroke="#6c94c4" />
          <path d={i === 0 ? 'M5.500 2h2v4h3l-4 4-4-4h3z' : 'M5.500 10h2V6h3l-4-4-4 4h3z'} fill={color} />
        </svg>
      </button>
    ))}
    {LEGEND.map(item => (
      <div key={item.label} className="flex items-center gap-[3px] border-r border-[#77909a] pl-[3px] pr-0.5">
        <span className="flex size-[10px]">
          <span className={`flex-1 ${item.left}`} />
          <span className={`flex-1 ${item.right}`} />
        </span>
        {item.label}
      </div>
    ))}
  </div>
);

interface AxisItem {
  y: number;
  text: string;
  style?: string;
}

interface PaneProps {
  top: number;
  height: number;
  className: string;
  axis: AxisItem[];
  overlay: React.ReactNode;
  children: React.ReactNode;
}

const Pane: React.FC<PaneProps> = ({ top, height, className, axis, overlay, children }) => (
  <section className={`flex border-b border-[#77909a] bg-white ${className}`}>
    <div className="relative min-w-0 flex-1 overflow-hidden border-r border-[#77909a]">
      <svg className="absolute inset-0 h-full w-full" viewBox={`${LEFT} ${top} ${WIDTH} ${height}`} preserveAspectRatio="none">
        {children}
      </svg>
      {overlay}
    </div>
    <div className="relative w-[15px] overflow-hidden">
      {axis.map(item => (
        <div key={item.y} className="absolute left-0 flex h-4 -translate-y-1/2 items-center" style={{ top: `${((item.y - top) / height) * 100}%` }}>
          <span className="h-px w-1 bg-[#77909a]" />
          <span className={`h-full border pl-px leading-[14px] ${item.style ?? 'border-transparent'}`}>{item.text}</span>
        </div>
      ))}
    </div>
  </section>
);

const CursorLine: React.FC = () => <path d={`M${CURSOR_X} 131V1012`} stroke="#000" strokeOpacity="0.250" />;

const Marker: React.FC<{ y: number; color: string }> = ({ y, color }) => (
  <circle cx={CURSOR_X} cy={y + 0.5} r="3" fill="#eef2ff" stroke={color} strokeWidth="1.200" />
);

const PriceChart: React.FC = () => {
  const tag = 'border-[#77909a] bg-linear-to-b from-white to-[#ccdaf2]';
  const axis: AxisItem[] = [
    { y: 162, text: '16' },
    { y: 219, text: '15', style: 'border-transparent font-bold' },
    { y: 335, text: '13' },
    { y: 393, text: '12' },
    { y: 451, text: '11' },
    { y: 509, text: '10', style: 'border-transparent font-bold' },
    { y: 567, text: '9' },
    { y: 682, text: '7' },
    { y: 740, text: '6' },
    { y: 797, text: '5', style: 'border-transparent font-bold' },
    { y: 270, text: '14', style: tag },
    { y: 260, text: '14,29', style: 'border-[#77909a] bg-[#ffff20]' },
    { y: 307, text: '13,48', style: 'border-[#77909a] bg-[#ffcc20]' },
    { y: 457, text: '10,89', style: `${tag} text-[#c4c4c4]` },
    { y: 531, text: '9,61', style: `${tag} text-[#ff0000]` },
    { y: 627, text: '7,95', style: `${tag} text-[#3333ff]` },
    { y: 645, text: '7,64', style: tag },
  ];
  return (
    <Pane
      top={131}
      height={750}
      className="min-h-0 flex-1"
      axis={axis}
      overlay={
        <>
          <Legend />
          <p className="absolute bottom-0 left-0.5 leading-[12px]">© ProRealTime.com <i className="ml-px">Daten sind End-of-Day</i></p>
        </>
      }
    >
      <defs>
        <linearGradient id="price-bg" x1="0" y1="0" x2="0" y2="1">
          <stop offset="0" stopColor="#fff" />
          <stop offset="1" stopColor="#dee7ff" />
        </linearGradient>
      </defs>
      <rect x="59" y="131" width="1845" height="750" fill="url(#price-bg)" />
      {CANDLES.map(([high, top, bottom, low, dir], i) => {
        const x = barX(i);
        return (
          <g key={i} stroke="#1f5c10">
            <path d={`M${x + 0.5} ${high}V${low + 1}`} />
            {bottom - top > 1 ? (
              <rect x={x - 1.5} y={top + 0.5} width="4" height={bottom - top} fill={dir === 'u' ? '#50d854' : '#e86c6c'} />
            ) : (
              <path d={`M${x - 2} ${bottom + 0.5}h5`} />
            )}
          </g>
        );
      })}
      <g fill="none" transform="translate(0.5 0.5)">
        <polyline points={SMA200} stroke="#3333ff" strokeWidth="2" />
        <polyline points={SMA20} stroke="#cacaca" />
        <polyline points={SMA50} stroke="#ff0000" />
        <polyline points={UPPER} stroke="#000" />
        <polyline points={LOWER} stroke="#000" />
      </g>
      <CursorLine />
      <path d="M59 260.500H1904" stroke="#000" strokeOpacity="0.250" />
      <Marker y={598} color="#000" />
      <Marker y={624} color="#000" />
      <Marker y={701} color="#cacaca" />
      <Marker y={735} color="#ff0000" />
      <Marker y={804} color="#000" />
      <Marker y={811} color="#3333ff" />
    </Pane>
  );
};

const VolumeChart: React.FC = () => (
  <Pane
    top={882}
    height={24}
    className="h-[25px] shrink-0"
    axis={[
      { y: 888, text: '10' },
      { y: 899, text: '2.', style: 'border-[#77909a] bg-[#eef2fa] text-[#999]' },
    ]}
    overlay={<PaneLabel label="Volumen"><span className="flex-1 bg-[#999]" /></PaneLabel>}
  >
    <rect x="59" y="882" width="1845" height="24" fill="#dfe8ff" />
    {VOLUME.map((v, i) =>
      v > 0 ? <rect key={i} x={barX(i) - 2.5} y={906 - v + 0.5} width="5" height={v} fill="#a5a5a5" stroke="#555" /> : null
    )}
    <CursorLine />
    <Marker y={900} color="#999" />
  </Pane>
);

const MomentumChart: React.FC = () => {
  const area = `59,${ZERO} ${MOMENTUM.map(p => p.join(',')).join(' ')} 1590,${ZERO}`;
  return (
    <Pane
      top={907}
      height={63}
      className="h-16 shrink-0"
      axis={[
        { y: 943, text: '0', style: 'border-transparent font-bold' },
        { y: 919, text: '3,06', style: 'border-[#77909a] bg-[#eef2fa] text-[#dc5050]' },
      ]}
      overlay={
        <PaneLabel label="Momentum (13)">
          <span className="flex-1 bg-black" />
          <span className="flex-1 bg-[#dc6464]" />
        </PaneLabel>
      }
    >
      <defs>
        <linearGradient id="momentum-up" gradientUnits="userSpaceOnUse" x1="0" y1="912" x2="0" y2="943">
          <stop offset="0" stopColor="#4fa158" />
          <stop offset="1" stopColor="#a9cfc8" />
        </linearGradient>
        <linearGradient id="momentum-down" gradientUnits="userSpaceOnUse" x1="0" y1="943" x2="0" y2="967">
          <stop offset="0" stopColor="#cdb9d0" />
          <stop offset="1" stopColor="#a04c58" />
        </linearGradient>
        <clipPath id="above"><rect x="59" y="907" width="1845" height="36" /></clipPath>
        <clipPath id="below"><rect x="59" y="943" width="1845" height="30" /></clipPath>
      </defs>
      <rect x="59" y="907" width="1845" height="63" fill="#dce6ff" />
      <polygon points={area} fill="url(#momentum-up)" clipPath="url(#above)" />
      <polygon points={area} fill="url(#momentum-down)" clipPath="url(#below)" />
      {MOMENTUM.slice(1).map(([x, y], i) => {
        const [px, py] = MOMENTUM[i];
        return (
          <path key={x} d={`M${px + 0.5} ${py + 0.5}L${x + 0.5} ${y + 0.5}`} stroke={y > py ? '#e06060' : '#111'} strokeWidth="1.200" strokeLinecap="round" />
        );
      })}
      <path d="M59 943.500H1904" stroke="#2222dd" />
      <CursorLine />
      <Marker y={931} color="#dc6464" />
    </Pane>
  );
};

const AtrChart: React.FC = () => (
  <Pane
    top={971}
    height={40}
    className="h-[41px] shrink-0"
    axis={[
      { y: 991, text: '0,5' },
      { y: 979, text: '0,8', style: 'border-[#77909a] bg-[#eef2fa]' },
    ]}
    overlay={<PaneLabel label="ATR (14)"><span className="flex-1 bg-black" /></PaneLabel>}
  >
    <defs>
      <linearGradient id="atr-fill" gradientUnits="userSpaceOnUse" x1="0" y1="975" x2="0" y2="1011">
        <stop offset="0" stopColor="#5656b4" />
        <stop offset="1" stopColor="#9a9fdc" />
      </linearGradient>
    </defs>
    <rect x="59" y="971" width="1845" height="40" fill="#d9e5ff" />
    <polygon points={`59,1011 ${ATR} 1590,1011`} fill="url(#atr-fill)" />
    <polyline points={ATR} fill="none" stroke="#000" transform="translate(0.5 0.5)" />
    <CursorLine />
    <Marker y={996} color="#000" />
  </Pane>
);

const DateAxis: React.FC = () => (
  <div className="h-[18px] shrink-0 border-b border-[#77909a] bg-white pr-4">
    <div className="relative h-full">
      {[...DATES.map(d => d[1]), ...EXTRA_TICKS].map(x => (
        <span key={x} className="absolute top-0 h-[3px] w-px bg-[#556]" style={{ left: pct(x) }} />
      ))}
      {DATES.map(([text, x]) => (
        <span key={x} className={`absolute top-1 -translate-x-1/2 leading-[13px] ${/^(\d\d)$/.test(text) ? '' : 'font-bold'}`} style={{ left: pct(x) }}>
          {text}
        </span>
      ))}
      <span className="absolute top-1 -translate-x-1/2 border border-[#77909a] bg-[#ffff20] leading-[12px] whitespace-nowrap" style={{ left: pct(198) }}>
        Do 09.05.2019
      </span>
    </div>
  </div>
);

const BottomBar: React.FC = () => (
  <div className="flex h-[25px] shrink-0 items-stretch border-b border-[#47616e] bg-[#9bbac7]">
    <button type="button" aria-label="Zeichnen" className="flex w-[31px] items-center justify-center bg-[#8097a2]"><PencilIcon /></button>
    <button type="button" aria-label="Zeichenoptionen" className="flex w-4 items-center justify-center"><Caret /></button>
    <button type="button" className="flex w-[85px] items-center gap-1 bg-linear-to-b from-white to-[#e8eaec] pl-1">
      <svg width="20" height="22" viewBox="0 0 20 22" fill="none">
        <path d="M1 5c2-4 5-6 8-1s5 7 10 1v5c-5 6-7 3-10-1s-6-3-8 2z" fill="#d4f0d4" stroke="#48b848" />
        <path d="M1 2c4 1 7 10 12 10 3 0 5-3 6-5" stroke="#d83030" />
        <path d="M1 22v-5h4v5zM9 22v-3h4v3z" fill="#d82020" />
        <path d="M4 22v-4h2v4zM6 22v-4h4v4zM14 22v-6h5v6z" fill="#14b814" />
      </svg>
      Indikatoren
    </button>
    <button type="button" aria-label="Indikatorliste" className="flex w-4 items-center justify-center border-l border-[#9aa] bg-[#f2f3f4]"><Caret /></button>
    <button type="button" className="flex w-[54px] items-center gap-[3px] bg-linear-to-b from-[#35a0e2] to-[#2289cc] pl-[3px] text-white">
      <svg width="16" height="16" viewBox="0 0 16 16" fill="#fff" stroke="#fff">
        <path d="M3 8l10-5M3 8l10 5" strokeWidth="1.500" />
        <circle cx="3" cy="8" r="2.300" /><circle cx="13" cy="3" r="2.300" /><circle cx="13" cy="13" r="2.300" />
      </svg>
      Share
    </button>
    <div className="flex w-[118px] items-center justify-between pl-1 pr-1.5">
      <button type="button" aria-label="Layout">
        <svg width="19" height="19" viewBox="0 0 19 19">
          <path d="M8 1H2v17h6v-3H5V4h3z" fill="#5a8cc4" stroke="#23466e" strokeWidth="1.500" />
          <path d="M11 1h6v17h-2V4h-4z" fill="#8a98a0" stroke="#667" />
          <path d="M10 14h8l-4 4z" fill="#111" stroke="#fff" />
        </svg>
      </button>
      <button type="button" aria-label="Kommentar">
        <svg width="17" height="18" viewBox="0 0 17 18">
          <path d="M1 0h7l3 3v10H1z" fill="#fff" stroke="#aab" />
          <path d="M6 6h9l1 1v6l-1 1h-3l-3 3v-3H6l-1-1V7z" fill="#2c70d8" stroke="#1c52a8" />
          <path d="M7 10h7" stroke="#fff" strokeWidth="1.500" strokeDasharray="1.500 1" />
        </svg>
      </button>
      <button type="button" aria-label="Charts vergleichen">
        <svg width="18" height="18" viewBox="0 0 18 18">
          <rect x="0.500" y="0.500" width="11" height="11" fill="#fff" stroke="#2458b8" />
          <path d="M1 2h11" stroke="#2458b8" strokeWidth="3" />
          <rect x="6.500" y="6.500" width="11" height="11" fill="#fff" stroke="#2458b8" />
          <path d="M6 8h12" stroke="#2458b8" strokeWidth="2" />
          <path d="M2 8l2-3 2 2" fill="none" stroke="#18a028" />
          <path d="M8 15l3-4 3 4 3-4" fill="none" stroke="#d82828" />
        </svg>
      </button>
      <button type="button" aria-label="Chart-Einstellungen">
        <svg width="17" height="18" viewBox="0 0 17 18">
          <path d="M13 0v18M3 6v12" stroke="#225" />
          <rect x="10" y="2" width="6" height="12" fill="#30d040" stroke="#107018" />
          <rect x="1" y="9" width="5" height="7" fill="#e04040" stroke="#801818" />
          <path d="M2 16l6-6c-1-3 1-5 3-5v3l2 1 2-1c0 3-2 4-5 3l-5 6z" fill="#fff" stroke="#333" />
        </svg>
      </button>
      <button type="button" aria-label="Einklappen">
        <svg width="9" height="10" viewBox="0 0 9 10" fill="none" stroke="#3d5560"><path d="M4 0L0.700 5 4 10M8.500 0L5.200 5l3.300 5" /></svg>
      </button>
    </div>
    <div className="flex flex-1 items-center py-1">
      <button type="button" aria-label="Nach links" className="flex h-4 w-[15px] items-center justify-center rounded-l-sm border border-[#77909a] bg-[#a9cad5]">
        <svg width="4" height="7" viewBox="0 0 4 7"><path d="M4 0v7L0 3.500z" fill="#111" /></svg>
      </button>
      <div className="flex h-4 flex-1 border-y border-[#77909a] bg-[#9bb7c3]">
        <div className="grow-[923]" />
        <div className="grow-[442] border-x border-[#77909a] bg-linear-to-b from-[#b3d5df] to-[#99bac7]" />
        <div className="grow-[18]" />
      </div>
      <button type="button" aria-label="Nach rechts" className="flex h-4 w-[15px] items-center justify-center rounded-r-sm border border-[#77909a] bg-[#a9cad5]">
        <svg width="4" height="7" viewBox="0 0 4 7"><path d="M0 0v7l4-3.500z" fill="#111" /></svg>
      </button>
    </div>
    <div className="flex w-[159px] items-center justify-between pl-[5px] pr-0.5">
      <button type="button" aria-label="Zum Datum">
        <svg width="21" height="20" viewBox="0 0 21 20">
          <rect x="5" y="3" width="15" height="14" fill="#fff" stroke="#bcc" />
          <path d="M5 5h15" stroke="#2080b8" strokeWidth="5" />
          <path d="M7 0v4M12 0v4M17 0v4" stroke="#ddd" />
          <path d="M8 10h11M8 13h11" stroke="#aab" strokeDasharray="2 1" />
          <rect x="14" y="10" width="3" height="3" fill="none" stroke="#e03030" />
          <path d="M0 14l6-5v3h8v4H6v3z" fill="#58d040" stroke="#289820" />
        </svg>
      </button>
      <button type="button" aria-label="Rückgängig">
        <svg width="16" height="16" viewBox="0 0 16 16"><path d="M5 6c6-1 10 3 7 8" fill="none" stroke="#6c9cd0" strokeWidth="2.500" /><path d="M7 1v9L0 6z" fill="#6c9cd0" /></svg>
      </button>
      <button type="button" aria-label="Wiederholen">
        <svg width="16" height="16" viewBox="0 0 16 16"><path d="M11 6C5 5 1 9 4 14" fill="none" stroke="#6c9cd0" strokeWidth="2.500" /><path d="M9 1v9l7-4z" fill="#6c9cd0" /></svg>
      </button>
      {['fit', 'out', 'in'].map(kind => (
        <button type="button" key={kind} aria-label={`Zoom ${kind}`}>
          <svg width="18" height="18" viewBox="0 0 18 18">
            <path d="M11 11l6 6" stroke="#111" strokeWidth="3" />
            <circle cx="7" cy="7" r="6" fill={kind === 'fit' ? '#d0d0d0' : '#fff'} stroke="#222" />
            {kind === 'fit' && <path d="M0 16h10M2 14l-2 2 2 2M8 14l2 2-2 2M16 1v9M14 3l2-2 2 2M14 8l2 2 2-2" fill="none" stroke="#0000f0" />}
            {kind !== 'fit' && <path d="M4 7h6" stroke="#0000f0" strokeWidth="2" />}
            {kind === 'in' && <path d="M7 4v6" stroke="#0000f0" strokeWidth="2" />}
          </svg>
        </button>
      ))}
    </div>
  </div>
);

const SideBar: React.FC = () => (
  <aside className="flex w-[31px] shrink-0 flex-col justify-between border-r border-[#77909a] bg-[#9bbac7]">
    <div className="flex flex-col items-center pt-0.5">
      {TOOLS.map(tool => (
        <ToolButton key={tool} tool={tool} />
      ))}
    </div>
    <button type="button" aria-label="Mehr" className="flex h-[31px] flex-col items-center justify-center border-t border-[#77909a] pt-1">
      <svg width="18" height="12" viewBox="0 0 18 12">
        <circle cx="3" cy="2.500" r="2" fill="#333" /><circle cx="9" cy="2.500" r="2" fill="#333" /><circle cx="15" cy="2.500" r="2" fill="#333" />
        <path d="M11 7h7l-3.500 4z" fill="#111" stroke="#fff" />
      </svg>
    </button>
  </aside>
);

const App: React.FC = () => (
  <div className="flex h-screen flex-col overflow-hidden bg-white font-['Liberation_Sans',Arial,sans-serif] text-[11px] leading-[14px] text-black">
    <Header />
    <div className="flex h-8 shrink-0 items-center border-b border-[#47616e] bg-[#9bbac7] pb-px pl-[3px]">
      {TOOLS.map(tool => (
        <ToolButton key={tool} tool={tool} />
      ))}
    </div>
    <main className="flex min-h-0 flex-1">
      <div className="flex w-[27px] shrink-0 flex-col bg-[#f8f8f8]">
        <div className="flex h-[31px] justify-end border-b-2 border-[#d8d8de] bg-white">
          <svg width="8" height="16" viewBox="0 0 8 16"><path d="M8 1L1 7l7 6M1 7h7" fill="none" stroke="#bbb" strokeWidth="1.500" /></svg>
        </div>
      </div>
      <div className="flex min-w-0 flex-1 flex-col border-l border-[#47616e]">
        <TitleBar />
        <div className="flex min-h-0 flex-1">
          <SideBar />
          <div className="flex min-w-0 flex-1 flex-col">
            <TradingPanel />
            <PriceChart />
            <VolumeChart />
            <MomentumChart />
            <AtrChart />
            <DateAxis />
          </div>
        </div>
        <BottomBar />
      </div>
    </main>
    <footer className="flex h-[25px] shrink-0 flex-col">
      <div className="flex flex-1">
        <div className="grow-[335] border-r border-[#ccc] bg-[#f8f8f8]" />
        <div className="grow-[1229] border-r border-[#c8d0d8] bg-white" />
        <div className="grow-[334] bg-[#f8f8f8]" />
        <div className="flex w-[21px] items-center justify-center bg-[#f0f0f0]">
          <svg width="10" height="5" viewBox="0 0 10 5"><path d="M0 0h10L5 5z" fill="#444" /></svg>
        </div>
      </div>
      <div className="flex h-0.5 bg-[#333]">
        <div className="grow-[60]" />
        <div className="grow-[430] bg-[#ccc]" />
        <div className="grow-[1430]" />
      </div>
    </footer>
  </div>
);

export default App;
